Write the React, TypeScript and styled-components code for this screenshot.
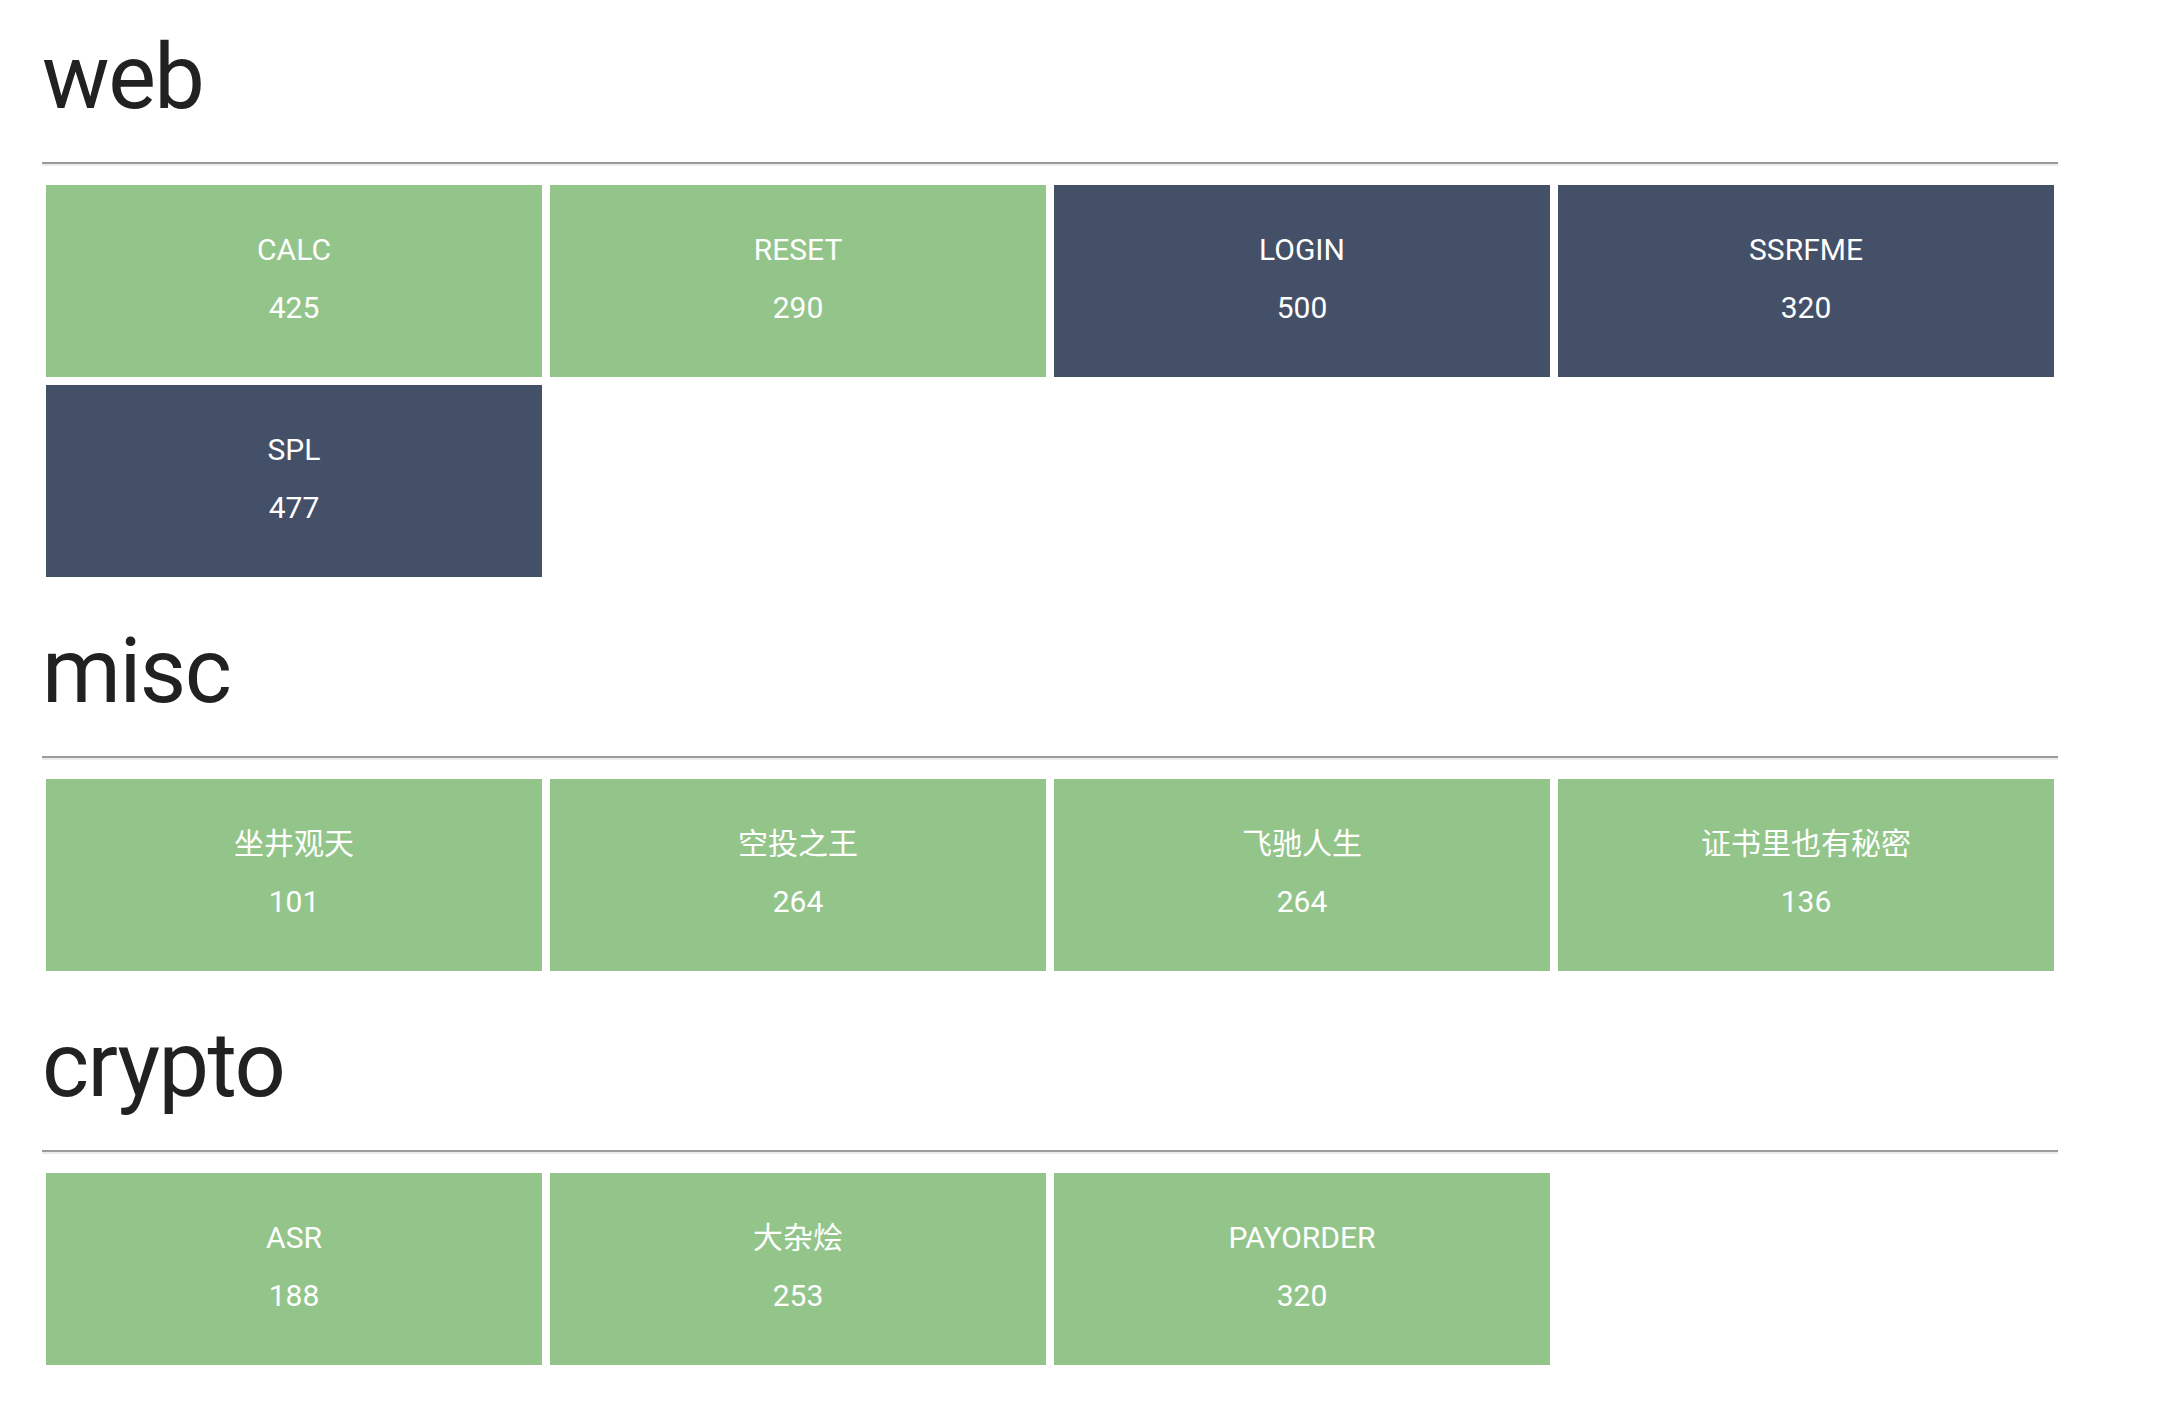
import styled, { createGlobalStyle } from 'styled-components'

const GlobalStyle = createGlobalStyle`
    html, body {
        margin: 0;
        padding: 0;
        background: #ffffff;
    }
    body {
        font-family: Roboto, 'Noto Sans CJK SC', sans-serif;
        color: #212121;
    }
`

type Status = 'open' | 'solved'

interface Challenge {
    name: string
    score: number
    status: Status
}

interface Category {
    title: string
    challenges: Challenge[]
}

const categories: Category[] = [
    {
        title: 'web',
        challenges: [
            { name: 'CALC', score: 425, status: 'open' },
            { name: 'RESET', score: 290, status: 'open' },
            { name: 'LOGIN', score: 500, status: 'solved' },
            { name: 'SSRFME', score: 320, status: 'solved' },
            { name: 'SPL', score: 477, status: 'solved' },
        ],
    },
    {
        title: 'misc',
        challenges: [
            { name: '坐井观天', score: 101, status: 'open' },
            { name: '空投之王', score: 264, status: 'open' },
            { name: '飞驰人生', score: 264, status: 'open' },
            { name: '证书里也有秘密', score: 136, status: 'open' },
        ],
    },
    {
        title: 'crypto',
        challenges: [
            { name: 'ASR', score: 188, status: 'open' },
            { name: '大杂烩', score: 253, status: 'open' },
            { name: 'PAYORDER', score: 320, status: 'open' },
        ],
    },
]

const Page = styled.main`
    width: 2016px;
    padding-left: 42px;
`

const Section = styled.section``

const Heading = styled.h1<{ $first: boolean }>`
    margin: ${(p) => (p.$first ? 23 : 36)}px 0 0;
    font-family: Roboto, sans-serif;
    font-size: 90px;
    font-weight: 400;
    letter-spacing: -1.5px;
    line-height: 109px;
    color: #212121;
`

const Rule = styled.hr`
    margin: 30px 0 15px;
    height: 0;
    border: none;
    border-top: 2px solid #9b9b9b;
    border-bottom: 2px solid #ececec;
`

const Grid = styled.div`
    display: grid;
    grid-template-columns: repeat(4, 496px);
    gap: 8px;
    padding: 4px;
`

const Card = styled.div<{ $status: Status }>`
    height: 192px;
    box-sizing: border-box;
    padding-bottom: 4px;
    display: flex;
    flex-direction: column;
    align-items: center;
    justify-content: center;
    background: ${(p) => (p.$status === 'solved' ? '#445068' : '#93c58b')};
    color: #ffffff;
    cursor: pointer;
`

const CardLine = styled.span`
    font-family: Roboto, 'Noto Sans CJK SC', sans-serif;
    font-size: 30px;
    line-height: 58px;
    font-weight: 400;
`

export default function App() {
    return (
        <Page>
            <GlobalStyle />
            {categories.map((c, i) => (
                <Section key={c.title}>
                    <Heading $first={i === 0}>{c.title}</Heading>
                    <Rule />
                    <Grid>
                        {c.challenges.map((ch) => (
                            <Card key={ch.name} $status={ch.status}>
                                <CardLine>{ch.name}</CardLine>
                                <CardLine>{ch.score}</CardLine>
                            </Card>
                        ))}
                    </Grid>
                </Section>
            ))}
        </Page>
    )
}
